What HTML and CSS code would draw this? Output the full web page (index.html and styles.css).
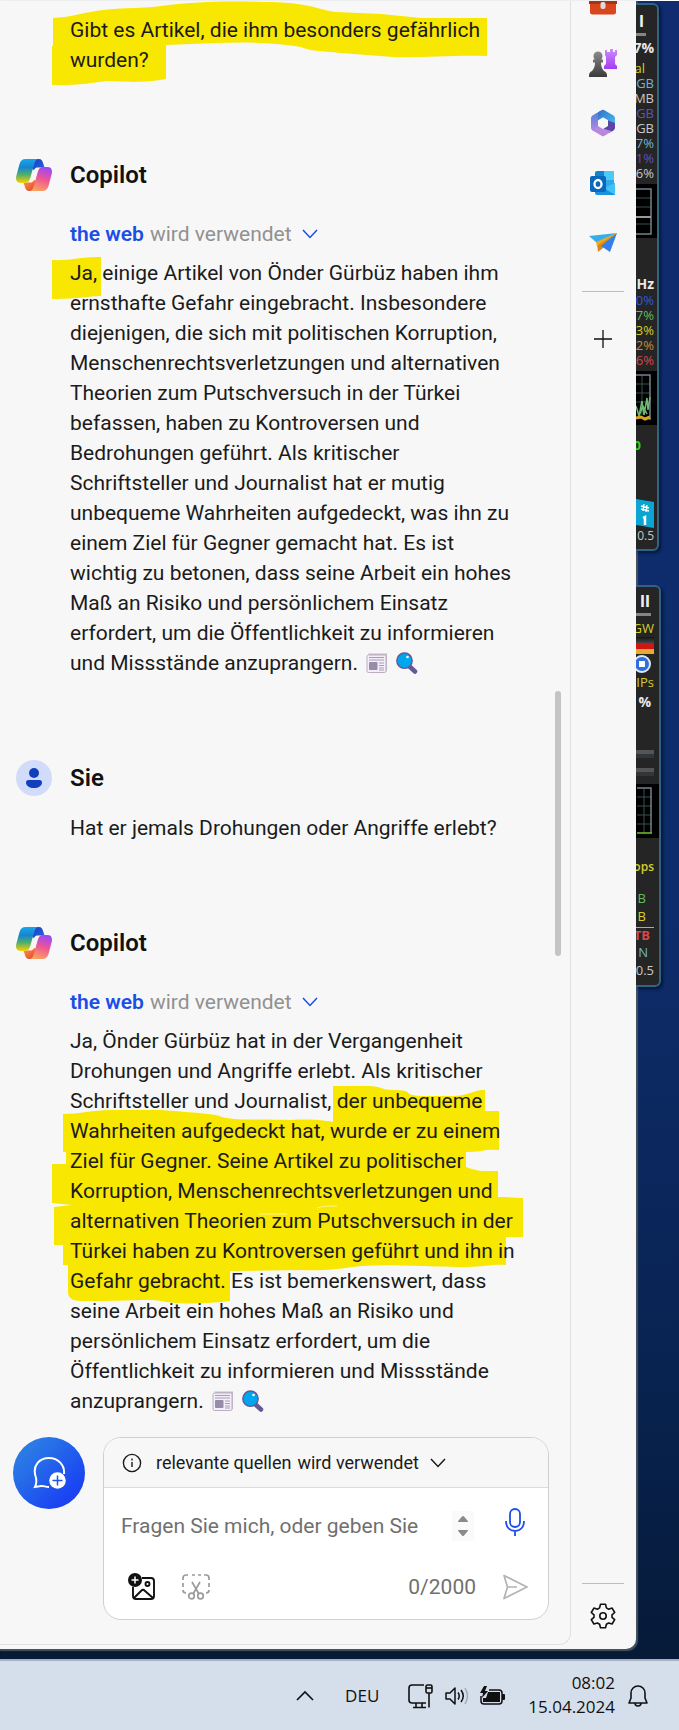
FILE: index.html
```html
<!DOCTYPE html>
<html lang="de">
<head>
<meta charset="utf-8">
<meta name="viewport" content="width=device-width, initial-scale=1">
<title>Copilot</title>
<link rel="stylesheet" href="styles.css">
</head>
<body>
<svg class="defs" aria-hidden="true">
  <defs>
    <linearGradient id="cp-left" x1="0" y1="0" x2="0" y2="1"><stop offset="0" stop-color="#19a5ee"/><stop offset=".35" stop-color="#1785cf"/><stop offset=".65" stop-color="#4fae6c"/><stop offset="1" stop-color="#ffd000"/></linearGradient>
    <linearGradient id="cp-right" x1=".6" y1="0" x2=".3" y2="1"><stop offset="0" stop-color="#a049f0"/><stop offset=".45" stop-color="#ec5597"/><stop offset="1" stop-color="#ffa45c"/></linearGradient>
    <linearGradient id="cp-top" x1="0" y1="0" x2="1" y2="1"><stop offset="0" stop-color="#1a3fc4"/><stop offset="1" stop-color="#2a62dc"/></linearGradient>
    <linearGradient id="cp-bot" x1="0" y1="0" x2="1" y2="1"><stop offset="0" stop-color="#ff9a3c"/><stop offset="1" stop-color="#e0403c"/></linearGradient>
    <symbol id="copilot" viewBox="0 0 36 32">
      <path fill="url(#cp-top)" d="M18 0h5c2.400 0 3.600 2 4.200 4.500L28.500 8.500H22c-2 0-3 .5-4 2.500l-2-1z"/>
      <path fill="url(#cp-bot)" d="M18 32h-5c-2.400 0-3.600-2-4.200-4.500L7.500 23.500H14c2 0 3-.5 4-2.500l2 1z"/>
      <path fill="url(#cp-left)" d="M9.500 0H23c-2.800 0-4 2-4.800 5l-3.800 13.500C13.200 22.500 12 24 8.500 24H4.500C.6 24-.6 21 .3 17L3.500 5C4.600 1.400 6.500 0 9.500 0z"/>
      <path fill="url(#cp-right)" d="M26.500 32H13c2.800 0 4-2 4.800-5l3.800-13.500C22.800 9.500 24 8 27.500 8h4c3.900 0 5.100 3 4.200 7l-3.200 12c-1.100 3.600-3 5-6 5z"/>
    </symbol>
    <symbol id="news" viewBox="0 0 22 21">
      <path d="M2 1h19v17l-2 2z" fill="#c5b9cb"/>
      <rect x="1" y="2.500" width="19" height="17.500" rx="1.500" fill="#f3eef7" stroke="#b9aec2"/>
      <path d="M3 5h15M3 7.500h15M13 10.500h5M13 13h5M13 15.500h5M13 17.500h5" stroke="#a99db5" stroke-width="1.200"/>
      <rect x="3" y="9.500" width="8.500" height="8" rx="1" fill="#998ca8"/>
    </symbol>
    <symbol id="lens" viewBox="0 0 22 22">
      <path d="M13 14l6 5.500" stroke="#635994" stroke-width="4.500" stroke-linecap="round"/>
      <circle cx="8.500" cy="8.700" r="7.700" fill="#00a6ed" stroke="#635994" stroke-width="1.400"/>
      <circle cx="11.500" cy="5" r="1.300" fill="#fff"/>
    </symbol>
    <symbol id="chevron" viewBox="0 0 16 10"><path d="M1 1l7 7.500L15 1" fill="none" stroke="currentColor" stroke-width="1.500"/></symbol>
  </defs>
</svg>

<div class="desktop">
  <main class="window">
    <section class="chat">
      <div class="thread">
        <p class="text question marked">
          <svg class="mark" width="480" height="90" aria-hidden="true"><path d="M2 17C20 16 26 13 40 11C60 6 90 8 110 5C150 0 180 0 210 1C262 1 265 9 285 11L330 13L370 17L436 17V55C400 54 370 57 342 56L290 52C270 50 258 50 250 46C220 41 190 41 165 42L115 44V78C90 82 80 81 55 80C30 84 20 84 1 84V45H2z"/></svg>
          <span>Gibt es Artikel, die ihm besonders gefährlich wurden?</span>
        </p>

        <article class="message">
          <header class="who"><svg class="avatar" aria-hidden="true"><use href="#copilot"/></svg><h2>Copilot</h2></header>
          <button class="source"><b>the web</b> wird verwendet <svg class="chev" aria-hidden="true"><use href="#chevron"/></svg></button>
          <p class="text marked">
            <svg class="mark" width="480" height="50" aria-hidden="true"><path d="M1 16C20 17 26 13 50 13V52C38 52 28 55 1 55z"/></svg>
            <span>Ja, einige Artikel von Önder Gürbüz haben ihm ernsthafte Gefahr eingebracht. Insbesondere diejenigen, die sich mit politischen Korruption, Menschenrechtsverletzungen und alternativen Theorien zum Putschversuch in der Türkei befassen, haben zu Kontroversen und Bedrohungen geführt. Als kritischer Schriftsteller und Journalist hat er mutig unbequeme Wahrheiten aufgedeckt, was ihn zu einem Ziel für Gegner gemacht hat. Es ist wichtig zu betonen, dass seine Arbeit ein hohes Maß an Risiko und persönlichem Einsatz erfordert, um die Öffentlichkeit zu informieren und Missstände anzuprangern. <svg class="emoji"><use href="#news"/></svg> <svg class="emoji"><use href="#lens"/></svg></span>
          </p>
        </article>

        <article class="message">
          <header class="who"><svg class="avatar user" viewBox="0 0 36 36" aria-hidden="true"><circle cx="18" cy="18" r="18" fill="#d1dcfb"/><circle cx="18" cy="13" r="5" fill="#123fbc"/><path d="M12.500 20h11a2.500 2.500 0 0 1 2.500 2.500C26 26 22.500 28 18 28s-8-2-8-5.500a2.500 2.500 0 0 1 2.500-2.500z" fill="#123fbc"/></svg><h2>Sie</h2></header>
          <p class="text own">Hat er jemals Drohungen oder Angriffe erlebt?</p>
        </article>

        <article class="message">
          <header class="who"><svg class="avatar" aria-hidden="true"><use href="#copilot"/></svg><h2>Copilot</h2></header>
          <button class="source"><b>the web</b> wird verwendet <svg class="chev" aria-hidden="true"><use href="#chevron"/></svg></button>
          <p class="text marked">
            <svg class="mark" width="490" height="310" aria-hidden="true"><path d="M282 80H318C330 80 330 84 342 84C365 84 350 89 370 90H400C420 90 420 84 434 84V105H448V144C430 143 435 146 415 146V161C430 166 430 165 447 165V191C460 191 465 192 472 192V231H455V259C440 258 435 261 415 261C350 260 340 258 310 260C280 264 270 265 250 264L179 265V295C160 297 140 299 115 296C100 292 90 295 30 295Q17 295 17 286V259H12V239H3V201L21 199L1 197V158H15V146H12V108C30 108 40 104 60 104H110C135 106 150 107 165 109C180 115 195 113 240 114C260 113 270 114 282 116z"/><path d="M208 208h28M266 202c6-2 12-2 20-2" class="gap"/></svg>
            <span>Ja, Önder Gürbüz hat in der Vergangenheit Drohungen und Angriffe erlebt. Als kritischer Schriftsteller und Journalist, der unbequeme Wahrheiten aufgedeckt hat, wurde er zu einem Ziel für Gegner. Seine Artikel zu politischer Korruption, Menschenrechtsverletzungen und alternativen Theorien zum Putschversuch in der Türkei haben zu Kontroversen geführt und ihn in Gefahr gebracht. Es ist bemerkenswert, dass seine Arbeit ein hohes Maß an Risiko und persönlichem Einsatz erfordert, um die Öffentlichkeit zu informieren und Missstände anzuprangern. <svg class="emoji"><use href="#news"/></svg> <svg class="emoji"><use href="#lens"/></svg></span>
          </p>
        </article>
        <i class="scrollbar"></i>
      </div>

      <form class="compose">
        <button type="button" class="new" aria-label="Neues Thema"><svg width="34" height="34" viewBox="0 0 34 34" fill="none" aria-hidden="true"><path d="M17 31c-4 0-5-1.500-8-1l-6 1c2-4 1.500-6 1-9C-.5 9 8 2 17 2s16 7 15 16" stroke="#fff" stroke-width="2"/><circle cx="25.500" cy="24.500" r="8.300" fill="#fff"/><path d="M20.500 24.500h10M25.500 19.500v10" stroke="#1d55ec" stroke-width="1.500"/></svg></button>
        <div class="box">
          <button type="button" class="relevant"><svg width="20" height="20" viewBox="0 0 20 20" fill="none" stroke="currentColor" stroke-width="1.400" aria-hidden="true"><circle cx="10" cy="10" r="8.600"/><path d="M10 9v5"/><path d="M10 5.500v2"/></svg><span>relevante quellen</span><span>wird verwendet</span><svg class="chev" aria-hidden="true"><use href="#chevron"/></svg></button>
          <div class="entry">
            <input type="text" aria-label="Nachricht" placeholder="Fragen Sie mich, oder geben Sie">
            <svg class="spin" width="22" height="30" viewBox="0 0 22 30" aria-hidden="true"><rect width="22" height="30" fill="#fafafa"/><path d="M6 11q0-1 1-2l3-3.500q1-1 2 0L15 9q1 1 1 2zM6 19q0 1 1 2l3 3.500q1 1 2 0L15 21q1-1 1-2z" fill="#8a8a8a"/></svg>
            <button type="button" class="tool mic" aria-label="Mikrofon"><svg width="20" height="28" viewBox="0 0 20 28" fill="none" stroke="#1d4fe8" stroke-width="1.800" aria-hidden="true"><rect x="5" y="1" width="10" height="18" rx="5"/><path d="M1 13c0 6 3.500 10 9 10s9-4 9-10M10 23v5"/></svg></button>
          </div>
          <div class="actions">
            <button type="button" class="tool" aria-label="Bild hinzufügen"><svg width="28" height="28" viewBox="0 0 28 28" fill="none" stroke="#111" stroke-width="1.900" aria-hidden="true"><path d="M14 5h9a3 3 0 0 1 3 3v15a3 3 0 0 1-3 3H8a3 3 0 0 1-3-3v-9M6 25l7.500-7.500a2 2 0 0 1 3 0L25 25"/><circle cx="19.500" cy="11" r="2"/><circle cx="7" cy="7" r="7" fill="#111" stroke="none"/><path d="M3.500 7h7M7 3.500v7" stroke="#fff" stroke-width="1.500"/></svg></button>
            <button type="button" class="tool" aria-label="Ausschnitt"><svg width="28" height="26" viewBox="0 0 28 26" fill="none" stroke="#9b9b9b" stroke-width="1.700" aria-hidden="true"><path d="M1 6V4a3 3 0 0 1 3-3h2M10 1h3M16 1h3M22 1h2a3 3 0 0 1 3 3v2M27 9v4M27 16a3 3 0 0 1-3 3M1 9v4M1 16a3 3 0 0 0 3 3M10 8l7 12M18 8l-7 12"/><circle cx="9.500" cy="22" r="2.800"/><circle cx="18.500" cy="22" r="2.800"/></svg></button>
            <output class="count">0/2000</output>
            <button class="tool" aria-label="Senden"><svg width="26" height="26" viewBox="0 0 26 26" fill="none" stroke="#b4b4b4" stroke-width="1.700" stroke-linejoin="round" aria-hidden="true"><path d="M2 1.500L25 13 2 24.500 5.500 13zM5.500 13H15"/></svg></button>
          </div>
        </div>
      </form>
    </section>

    <nav class="rail" aria-label="Seitenleiste">
      <button class="app first" aria-label="Tools"><svg width="28" height="14" viewBox="0 0 28 14" aria-hidden="true"><path d="M0 0h28v3H0z" fill="#a83216"/><path d="M1 3h26v8a2.500 2.500 0 0 1-2.500 2.500h-21A2.500 2.500 0 0 1 1 11z" fill="#d9451c"/><rect x="11.500" y="1" width="5" height="7" rx="2" fill="#ddd"/></svg></button>
      <button class="app" aria-label="Spiele"><svg width="28" height="28" viewBox="0 0 28 28" aria-hidden="true"><defs><linearGradient id="rook" x2="0" y2="1"><stop stop-color="#cc8bff"/><stop offset="1" stop-color="#a23cf0"/></linearGradient><linearGradient id="pawn" x2="0" y2="1"><stop stop-color="#8b8b8b"/><stop offset="1" stop-color="#3a3a3a"/></linearGradient></defs><path d="M16 1h2v2h3V0h3v3h2V1h2v5l-2 2v7l2 2v3H15v-3l2-2V8l-1-2z" fill="url(#rook)"/><path d="M4.500 7a4.500 4.500 0 0 1 9 0c0 1.500-.5 2.500-1.500 3.500h2v3h-2c0 4 1 6 3 8.500 2 1 3 2 3 5v1H0v-1c0-3 1-4 3-5 2-2.500 3-4.500 3-8.500H4v-3h2C5 9.500 4.500 8.500 4.500 7z" fill="url(#pawn)"/></svg></button>
      <button class="app" aria-label="Microsoft 365"><svg width="26" height="28" viewBox="0 0 26 28" aria-hidden="true"><defs><linearGradient id="m3" x2="0" y2="1"><stop stop-color="#4f7fd6"/><stop offset="1" stop-color="#b98be6"/></linearGradient><linearGradient id="m4" x2="1" y2="1"><stop stop-color="#2f6fc9"/><stop offset="1" stop-color="#4cc3f2"/></linearGradient></defs><path d="M11 1.500L2.500 6.500Q1 7.500 1 9v10q0 1.500 1.500 2.400L8 24l5-4-5-3.500V8z" fill="url(#m3)"/><path d="M9 2.700L12 1q1-.6 2 0l9.500 5.500Q25 7.500 25 9v9l-7-2.500v-4.300L13 8.500l-5 3V4z" fill="url(#m4)"/><path d="M25 14v5q0 1.500-1.500 2.400L19 24l-6-4.500 5-3v-5z" fill="#5b46a8"/><path d="M2 21l10 6q1 .6 2 0l8-4.700-9-2.800-5-3-3 3.500z" fill="#b887df"/><path d="M13 8.500l5 3v5.500l-5 3-5-3v-5.500z" fill="#f7f7f7"/></svg></button>
      <button class="app" aria-label="Outlook"><svg width="26" height="26" viewBox="0 0 26 26" aria-hidden="true"><rect x="5" y="1" width="19" height="18" rx="2" fill="#1681cf"/><path d="M14 1h10v9H14z" fill="#4cc9f6"/><path d="M14 10h10v7H14z" fill="#2eaae8"/><path d="M5 12l10 7 10-6v12H7a2 2 0 0 1-2-2z" fill="#1b91de"/><path d="M25 13v12L14 18z" fill="#40c2f4"/><rect y="6" width="16" height="16" rx="2" fill="#0868bd"/><ellipse cx="8" cy="14" rx="3.500" ry="4" fill="none" stroke="#fff" stroke-width="2.300"/></svg></button>
      <button class="app" aria-label="Drop"><svg width="28" height="20" viewBox="0 0 28 20" aria-hidden="true"><path d="M0 3L28 0 8 10z" fill="#35aeea"/><path d="M28 0L7 9l2 9z" fill="#f2a922"/><path d="M28 0L9 12v7l5-4z" fill="#d98a15"/><path d="M28 0L12 13l9 6z" fill="#3480e8"/></svg></button>
      <hr>
      <button class="app add" aria-label="Hinzufügen"><svg width="20" height="20" viewBox="0 0 20 20" aria-hidden="true"><path d="M10 1v18M1 10h18" stroke="#111" stroke-width="1.300"/></svg></button>
      <hr class="low">
      <button class="app gear" aria-label="Einstellungen"><svg width="26" height="26" viewBox="0 0 26 26" fill="none" stroke="#111" stroke-width="1.600" stroke-linejoin="round" aria-hidden="true"><path d="M10.500 1.300h5l.9 3.600 2.200 1.300 3.500-1.100 2.600 4.400-2.700 2.400v2.400l2.700 2.400-2.600 4.300-3.500-1-2.200 1.200-.9 3.600h-5l-.9-3.600-2.200-1.200-3.500 1-2.600-4.300L4 14.300v-2.400L1.300 9.500l2.600-4.400 3.500 1.100 2.200-1.300z"/><circle cx="13" cy="13" r="3.200"/></svg></button>
    </nav>
  </main>

  <aside class="gadgets">
    <section class="gadget">
      <h3>I</h3><i class="bar"></i>
      <b class="big">7%</b>
      <ul class="rows"><li class="y">al</li><li class="c">GB</li><li>MB</li><li class="v">GB</li><li>GB</li><li class="c">7%</li><li class="v">1%</li><li>6%</li></ul>
      <svg class="graph" viewBox="0 0 21 54" aria-hidden="true"><path d="M0 14h15M0 23h15M0 40h15" stroke="#35524f"/><path d="M0 5h15v45H0" fill="none" stroke="#76818c" stroke-width="1.500"/><path d="M0 33h15" stroke="#999" stroke-width="2"/></svg>
      <b class="big hz">Hz</b>
      <ul class="rows"><li class="b">0%</li><li class="g">7%</li><li class="y">3%</li><li class="o">2%</li><li class="r">6%</li></ul>
      <svg class="graph" viewBox="0 0 21 54" aria-hidden="true"><path d="M0 13h14M0 22h14M0 31h14M6 4v40" stroke="#35524f"/><path d="M0 4h14v45" fill="none" stroke="#76818c" stroke-width="1.500"/><path d="M0 35l3 10 3-15 2 14 3-17 1 12 2-13M3 45l4-10 4 8" fill="none" stroke="#6fba70" stroke-width="1.500"/><path d="M0 47l5-1 4 2 5-2" stroke="#d9a321" stroke-width="3" fill="none"/></svg>
      <b class="zero">0</b>
      <svg class="tile" viewBox="0 0 18 30" aria-hidden="true"><path d="M0 1l18 3v26L0 27z" fill="#0aa5d2"/><path d="M5 8l8 2M5 11l8 2M8 6l-1 7M11 7l-1 7" stroke="#fff" stroke-width="1.300"/><path d="M7 20l2-1v8" fill="none" stroke="#fff" stroke-width="2.500"/></svg>
      <small>0.5</small>
    </section>
    <section class="gadget second">
      <h3>II</h3><i class="bar"></i>
      <span class="y">GW</span>
      <i class="flag"></i>
      <svg class="dot" viewBox="0 0 18 18" aria-hidden="true"><circle cx="9" cy="9" r="8" fill="#2e6ee0" stroke="#dfe7f5" stroke-width="2"/><rect x="6" y="6" width="6" height="6" fill="#fff"/></svg>
      <span class="y">IPs</span>
      <b class="big">%</b>
      <i class="meter"></i><i class="meter"></i>
      <svg class="graph" viewBox="0 0 21 54" aria-hidden="true"><path d="M0 13h15M0 22h15M0 31h15M0 40h15M7 4v45" stroke="#35524f"/><path d="M0 4h14v45" fill="none" stroke="#76818c" stroke-width="1.500"/><path d="M0 49h15" stroke="#6cc535" stroke-width="1.500"/></svg>
      <b class="ops y">ops</b>
      <ul class="drives"><li class="g">B</li><li class="y">B</li><li class="r line">TB</li><li class="c">N</li><li>0.5</li></ul>
    </section>
  </aside>
</div>

<footer class="taskbar">
  <button aria-label="Ausgeblendete Symbole"><svg width="18" height="11" viewBox="0 0 18 11" fill="none" stroke="#111" stroke-width="1.700" aria-hidden="true"><path d="M1 10l8-8 8 8"/></svg></button>
  <button class="lang">DEU</button>
  <button class="status" aria-label="Netzwerk, Lautstärke, Akku">
    <svg width="26" height="26" viewBox="0 0 26 26" fill="none" stroke="#111" stroke-width="1.600" aria-hidden="true"><path d="M16 2H4a3 3 0 0 0-3 3v12a3 3 0 0 0 3 3h14M8 20v4M14 20v4M5 24.500h13M21 10v14.500"/><rect x="18" y="2" width="6" height="8" rx="1.500"/><path d="M18 5h6"/></svg>
    <svg width="24" height="20" viewBox="0 0 24 20" fill="none" stroke="#111" stroke-width="1.500" stroke-linejoin="round" aria-hidden="true"><path d="M1 7h4l5-5v16l-5-5H1z"/><path d="M13 6.500q2.500 3.500 0 7M16 4q4.500 6 0 12"/><path d="M20 2q5 8 0 16" stroke="#a5adb8"/></svg>
    <svg width="25" height="20" viewBox="0 0 25 20" aria-hidden="true"><path d="M9 4h10a3 3 0 0 1 3 3v8a3 3 0 0 1-3 3H4a3 3 0 0 1-3-3V10" fill="none" stroke="#111" stroke-width="1.500"/><path d="M8 6h12v10H3v-4h3z" fill="#111"/><path d="M4 0L0 7h3l-1 5 6-7H5l2-5z" fill="#111"/><rect x="22" y="8" width="3" height="6" rx="1" fill="#111"/></svg>
  </button>
  <time datetime="2024-04-15T08:02">08:02<br>15.04.2024</time>
  <button aria-label="Benachrichtigungen"><svg width="20" height="22" viewBox="0 0 20 22" fill="none" stroke="#111" stroke-width="1.600" stroke-linejoin="round" aria-hidden="true"><path d="M10 1a7 7 0 0 0-7 7v5l-2 5h18l-2-5V8a7 7 0 0 0-7-7zM7 18c0 4 6 4 6 0"/></svg></button>
</footer>
</body>
</html>
```

FILE: styles.css
```css
* { box-sizing: border-box; }
body {
  margin: 0;
  min-height: 100vh;
  display: flex;
  flex-direction: column;
  font-family: Roboto, "Liberation Sans", sans-serif;
  color: #1b1b1b;
}
button { padding: 0; border: 0; background: none; font: inherit; color: inherit; cursor: pointer; }
svg { display: block; flex: none; }
h2, h3, p, ul { margin: 0; padding: 0; }
ul { list-style: none; }
.defs { position: absolute; width: 0; height: 0; }

.desktop {
  flex: 1;
  display: grid;
  grid-template-columns: minmax(0, 1fr) 43px;
  padding-bottom: 10px;
  border-top: 1px solid #fff;
  background: linear-gradient(#102b6f, #0e2c6b 55%, #08224e 85%, #061a38);
}
.window {
  display: flex;
  background: #f7f7f7;
  border-radius: 0 0 10px 0;
  box-shadow: 1px 1px 1px 1px #45525f;
}
.chat {
  flex: 1;
  min-width: 0;
  display: flex;
  flex-direction: column;
  justify-content: space-between;
  margin-bottom: 4px;
  padding-bottom: 24px;
  border: solid #e0e0e0;
  border-width: 0 1px 1px 0;
  border-radius: 0 0 12px 0;
}

.thread { position: relative; padding: 14px 52px 0 70px; }
.text { font-size: 21px; line-height: 30px; }
.marked { position: relative; }
.marked span { position: relative; }
.mark { position: absolute; top: -14px; left: -19px; fill: #f8e700; overflow: visible; }
.message:last-of-type .mark { top: -20px; }
.gap { fill: none; stroke: #fbf39a; }
.emoji { display: inline-block; width: 22px; height: 22px; vertical-align: -4px; margin-left: 3px; }

.message { padding-top: 82px; }
.who { display: flex; align-items: center; gap: 18px; margin-left: -54px; height: 36px; }
.who h2 { font-size: 24px; line-height: 30px; font-weight: 600; color: #111; }
.avatar { width: 36px; height: 32px; }
.avatar.user { height: 36px; }
.source { display: flex; align-items: center; gap: 6px; margin: 26px 0 9px; font-size: 21px; line-height: 30px; color: #919191; }
.source b { color: #1a4ee6; font-weight: 600; }
.chev { width: 16px; height: 10px; }
.source .chev { color: #1a4ee6; margin-left: 4px; }
.own { margin-top: 17px; }
.scrollbar { position: absolute; top: 690px; right: 9px; width: 6px; height: 265px; border-radius: 3px; background: #c4c4c4; }

.compose { display: flex; align-items: flex-start; gap: 18px; padding: 0 21px 0 13px; }
.new { width: 72px; height: 72px; flex: none; display: grid; place-items: center; border-radius: 50%; background: linear-gradient(135deg, #2a7ae6 20%, #1a43f2 80%); }
.box { flex: 1; min-width: 0; border: 1px solid #d0d0d0; border-radius: 18px; background: #fff; overflow: hidden; }
.relevant { display: flex; align-items: center; gap: 6px; width: 100%; height: 50px; padding-left: 18px; background: #f7f7f7; border-bottom: 1px solid #dcdcdc; font-size: 18px; }
.relevant svg + span { margin-left: 8px; }
.relevant .chev { margin-left: 5px; }
.entry { display: flex; align-items: center; height: 75px; padding: 0 23px 0 17px; }
.entry input { flex: 1; min-width: 0; padding: 0; border: 0; outline: 0; background: none; font: 21px/30px Roboto, sans-serif; }
.entry input::placeholder { color: #707070; }
.spin { margin-right: 31px; }
.mic { padding-bottom: 8px; }
.actions { display: flex; align-items: center; gap: 26px; height: 56px; padding: 0 20px 8px 24px; }
.count { margin-left: auto; font-size: 21px; color: #707070; }

.rail { width: 65px; display: flex; flex-direction: column; align-items: center; padding: 0 1px 14px 0; }
.app { height: 60px; display: grid; place-items: center; }
.app.first { height: 32px; align-items: start; }
.rail hr { width: 42px; height: 1px; margin: 18px 0 17px; border: 0; background: #bdbdbd; flex: none; }
.rail .low { margin: auto 0 13px; }
.app.gear { height: 38px; }

.gadgets { font: 13px/15px "Open Sans", "Noto Sans", sans-serif; color: #c8c8c8; overflow: hidden; }
.gadget {
  display: flex;
  flex-direction: column;
  align-items: flex-end;
  width: 23px;
  height: 548px;
  margin-top: 2px;
  padding: 8px 3px 0 0;
  border: 2px solid #2f6486;
  border-left: 0;
  border-radius: 0 6px 6px 0;
  background: #252525;
  box-shadow: 2px 2px 3px #061738;
  overflow: hidden;
}
.gadget > *, .gadget li { flex: none; }
.gadget li { display: flex; justify-content: flex-end; height: 15px; }
.gadget h3 { font: 700 17px/16px Roboto, sans-serif; color: #eee; padding-right: 10px; }
.bar { width: 20px; height: 3px; margin: 4px 8px 4px 0; background: #858585; }
.big { font-size: 14px; line-height: 16px; color: #e8e8e8; }
.rows { margin-top: 5px; }
.rows .y:first-child { margin-right: 9px; }
.graph { width: 21px; height: 54px; margin: 3px -3px 0 0; background: #000; }
.hz { margin-top: 38px; }
.hz + .rows { margin-top: 1px; }
.zero { color: #2ed615; margin: 13px 13px 0 0; }
.tile { width: 18px; height: 30px; margin-top: 45px; }
.gadget small { font-size: 12px; }
.second { width: 25px; height: 402px; margin-top: 34px; padding: 6px 5px 0 0; }
.second h3 { padding-right: 4px; }
.second .bar { margin-right: 3px; margin-bottom: 5px; }
.second .graph { margin: 8px -5px 0 0; width: 23px; }
.flag { width: 20px; height: 17px; margin-top: 1px; background: linear-gradient(#151515, #444 35%, #d01515 35% 68%, #e6ab2e 68%); }
.dot { width: 18px; height: 18px; margin: 1px 3px 0 0; }
.dot + span { margin: 2px 0 4px; }
.second .big { margin: 0 3px 40px 0; }
.meter { width: 20px; height: 8px; margin-bottom: 10px; background: linear-gradient(#555 45%, #30363a 45%); }
.meter + .meter { margin-bottom: 0; }
.gadget .ops { margin-top: 21px; font-weight: 600; font-size: 12px; }
.drives { align-self: stretch; margin-top: 17px; }
.second .drives li { height: 18px; padding-right: 8px; }
.second .drives li:last-child { padding-right: 0; }
.second .drives .line { border-top: 1px solid #aaa; padding-right: 4px; font-weight: 700; }
.second .drives .c { padding-right: 6px; }
.y { color: #d6cf2e; } .c { color: #73b3cf; } .v { color: #5d55b5; } .b { color: #3159d8; }
.g { color: #66bb61; } .o { color: #c98a3b; } .r { color: #d5484c; }

.taskbar {
  display: flex;
  align-items: center;
  justify-content: flex-end;
  height: 71px;
  padding: 0 31px 0 0;
  border-top: 2px solid #a8b1c3;
  background: #d5dfeb;
  font-family: "Open Sans", "Noto Sans", sans-serif;
  font-size: 17px;
  line-height: 24px;
  color: #111;
}
.lang { margin: 0 29px 0 31px; }
.status { display: flex; align-items: center; gap: 11px; }
.taskbar time { margin: 0 13px 2px 23px; text-align: right; }
```
